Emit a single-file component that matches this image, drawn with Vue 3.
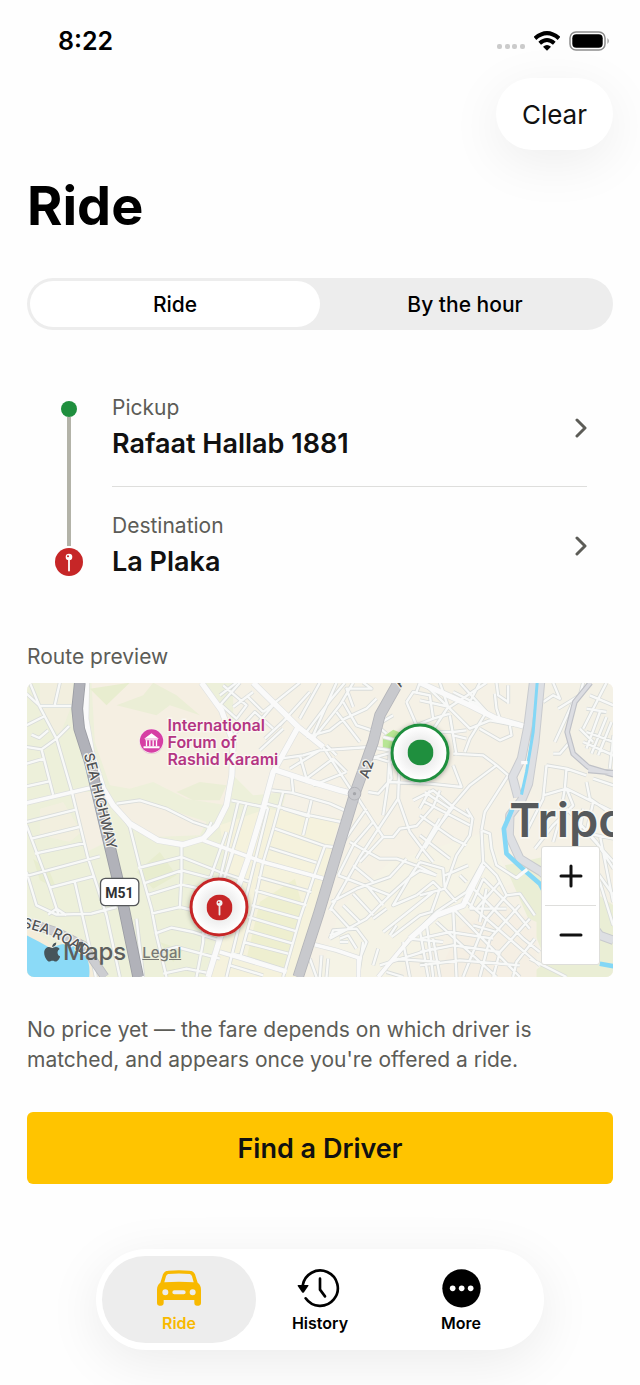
<script setup>
import { ref } from 'vue'

const modes = ['Ride', 'By the hour']
const activeMode = ref('Ride')
const activeTab = ref('Ride')

const tabs = [
  { name: 'Ride', icon: 'car' },
  { name: 'History', icon: 'clock' },
  { name: 'More', icon: 'more' }
]

const stops = ref([
  { label: 'Pickup', name: 'Rafaat Hallab 1881' },
  { label: 'Destination', name: 'La Plaka' }
])

const markers = [
  { kind: 'pickup', left: '67.1%', top: '23.8%' },
  { kind: 'dropoff', left: '32.8%', top: '76.2%' }
]

// map geometry, three units per pixel
const minorRoads = [
  // west of the sea highway
  'M30 22L60 95L110 190L155 345L205 550L260 720L300 905',
  'M20 55L60 92L155 92M120 22L105 88M20 150L75 122M35 178L58 188L85 165',
  'M20 215L65 222L110 190L148 152M65 222L100 358M20 265L72 250M20 333L88 318',
  'M20 440L168 403M35 490L178 455M45 535L195 503M20 602L240 543',
  'M20 450L90 637L115 715M20 590L50 690L110 718L215 715L290 695',
  'M90 637L225 602M165 620L215 840L228 905M85 718L110 700L140 720',
  // under the forum
  'M290 385L360 375L440 400L520 440L580 460M300 410L330 455L360 575L395 700L410 780L440 905',
  'M485 510L485 600L480 700M355 578L485 545L600 590L690 620M370 625L485 585L580 610',
  'M380 660L485 628L540 640M395 715L480 695L520 705M405 775L455 757L520 770L600 795',
  'M410 832L470 815L600 850M430 895L500 880L560 892M550 495L575 440M640 530L600 650',
  'M552 700L550 800L530 905M350 730L370 905',
  'M635 375L745 398M620 470L560 640M655 380L560 780',
  // grid east of the forum
  'M680 385L635 535L590 690M745 398L690 620L620 905M790 350L760 460L730 560L700 700L660 850',
  'M755 345L815 352L930 385L975 405M740 385L870 420L965 440M765 460L915 512L940 515M875 375L850 480M790 400L870 425',
  'M750 518L890 562M730 560L910 610M715 605L875 650M705 645L860 690M695 690L840 730M685 725L830 768',
  'M680 765L820 805M670 800L805 835M640 835L800 885M915 512L880 610L840 730L790 905M630 870L730 900',
  'M815 300L820 350M840 22L730 110M870 50L780 150M730 110L680 60M610 30L680 90L650 130L600 85',
  'M600 60L650 22M660 22L600 90M640 95L700 50M700 160L760 90M735 190L810 120M640 180L705 110L760 160',
  'M720 225L790 160M860 170L935 70L975 22M900 22L840 130M950 22L880 180M880 190L960 90L1000 22',
  'M970 80L1010 150L1070 170M950 110L1020 200M910 215L995 345M900 225L1050 215L1110 225L1200 235',
  'M860 185L930 165L975 130L1040 100L1070 70M1000 95L980 40L1055 40L1030 22M780 250L850 240L900 225',
  'M810 280L900 225M840 240L860 310M860 310L940 250M880 330L980 290M940 250L980 290M920 210L950 240',
  // centre, between A2 and the old town
  'M1015 370L1060 440L1090 485L1120 485L1140 460L1190 452L1240 395L1260 345M1040 400L970 500M1045 240L1110 260L1115 310L1075 355L1045 350',
  'M1050 250L1140 225M1090 185L1150 200M1120 120L1070 150L1100 175M1110 225L1105 320L1090 420M1140 230L1135 370L1170 470',
  'M1110 260L1200 270M1105 320L1230 325L1325 335L1300 270M1135 370L1020 545L930 705M1180 375L1240 345L1300 395L1350 425',
  'M990 500L1080 550L1130 550L1200 575L1250 600M1170 470L1215 530L1240 560M1060 440L1000 510L955 600M1090 485L1020 560',
  'M1200 560L1170 605L1110 660L1040 730L930 790M1160 550L1110 605L1010 640L935 680M955 600L1020 625L1110 660M1000 570L1060 620',
  'M1040 630L1090 690M1000 655L1060 720M970 690L1020 740M935 700L990 760L930 780M1250 600L1200 585L1170 605L1120 690L1190 660',
  'M1190 660L1240 620L1260 640L1235 710L1200 720L1115 785M1090 770L1240 650M1075 820L1060 870M1110 780L1130 750',
  'M930 790L940 765L1010 760L1040 800L1020 850M960 790L985 780L1010 820M985 800L960 800M870 850L890 905M905 840L900 905M925 850L920 905',
  'M1030 800L1015 900M1075 905L1200 760L1260 710M1080 870L1240 820M1120 850L1260 860M1150 800L1170 905M1200 765L1225 905M1170 790L1270 800',
  'M1100 890L1150 905M1060 730L1100 700',
  // north, around the pickup point
  'M1160 80L1190 150L1240 130L1230 60L1180 50L1160 80M1190 50L1200 22M1240 130L1290 115M1210 22L1290 100L1350 160L1410 135',
  'M1200 75L1290 95L1400 22M1260 22L1285 95L1235 170L1300 170L1340 165M1300 50L1380 90L1420 130M1380 22L1350 80L1430 130',
  'M1430 22L1435 60L1465 80M1465 30V85M1320 22L1400 110L1350 190L1335 230M1290 120L1300 180L1340 190M1440 130L1430 100L1425 55',
  'M1410 135L1490 150M1380 160L1440 195L1475 180L1470 150M1300 235L1390 240L1430 270L1465 300L1395 410L1385 465',
  'M1310 240L1300 180M1430 270L1350 330L1290 400L1215 520M1340 400L1358 430L1350 480L1310 540L1275 640L1200 660',
  'M1200 420L1300 490L1340 510M1215 380L1350 450M1200 480L1290 550M1230 345L1200 400M1290 400L1215 350M1260 430L1190 550M1300 395L1220 500',
  'M1275 600L1345 570M1200 560L1270 580L1275 640L1310 680M1385 465L1390 560L1340 650L1250 710L1200 760',
  'M1385 465L1410 475L1415 520L1430 570L1490 608L1520 580M1320 600L1340 620M1390 560L1430 600L1460 660L1500 655L1545 720',
  // south east blocks
  'M1300 700L1310 905M1330 670L1560 870M1360 640L1510 790L1560 830M1390 610L1480 700L1530 760M1250 740L1430 905M1300 700L1500 905',
  'M1460 660L1400 730L1330 905M1500 690L1410 790L1380 905M1530 730L1440 830L1420 905M1545 790L1490 860L1480 905M1390 610L1350 700',
  'M1200 790L1290 770L1420 790M1200 830L1300 810L1440 830M1200 870L1320 855L1500 870M1240 790L1260 905M1220 740L1240 905M1350 700L1460 700',
  'M1400 640L1380 740M1440 620L1370 700M1360 750L1430 770M1530 850L1640 905',
  // far east
  'M1570 80L1600 60L1620 70L1600 22M1615 100L1680 60L1690 22M1605 200L1660 80M1600 235H1620L1650 200M1580 270L1640 280L1700 300',
  'M1580 270L1570 370L1520 470M1640 280L1635 340L1620 430L1600 500M1570 360L1640 340L1780 410M1640 340L1660 390L1600 450L1545 520',
  'M1700 320L1710 370L1781 420M1720 310L1781 330M1690 400L1680 470L1781 490M1720 380L1700 470L1781 560M1640 400L1730 500L1781 580',
  'M1710 60L1781 90M1700 100L1760 110M1760 22L1720 100L1690 160M1680 160L1720 200M1740 110L1700 220M1760 125L1715 235M1775 140L1735 240M1700 170L1781 200M1690 200L1781 240M1770 280L1781 180',
  'M1740 480L1780 680M1740 620L1780 750M1710 560L1781 660'
].join('')

const mainRoads = [
  'M200 22L198 130L215 230L250 340L280 390L330 445L415 495L490 508L550 490L590 450L620 390L636 300L640 200L605 105L545 22',
  'M700 22L835 155L910 215M835 155L760 290L730 400L685 550L600 790L565 905',
  'M760 282L860 315L960 345L1000 355',
  'M1200 22L1350 90L1430 130L1510 152M1170 790L1250 720L1330 690L1390 570'
].join('')

const sideRoads = 'M20 383L210 338M550 495L730 560L920 612M600 830L800 890M885 808L950 825L1025 850M1016 850V905M1075 905L1170 790'

const eastRoads = [
  'M1541 22L1525 150L1505 250L1478 305L1494 365',
  'M1562 22L1545 200L1526 325L1505 375L1470 420L1468 480L1500 550L1565 590L1680 700L1740 780L1781 795'
].join('')
const railway = 'M1712 22L1665 80L1642 170L1660 235L1705 275L1781 298M1705 285L1781 292'
const seaHighway = 'M180 22L172 100L178 160L210 260L255 450L300 640L355 905'
const a2 = 'M1135 22L1080 120L1060 200L1030 285L1005 355L955 520L895 720L835 905'
</script>

<template>
  <div class="screen">
    <header class="status-bar">
      <span class="time">8:22</span>
      <div class="status-icons">
        <svg width="28" height="20" viewBox="0 0 28 20" fill="#cbcbcb">
          <rect x="0" y="13" width="5" height="5" rx="2" />
          <rect x="8" y="13" width="5" height="5" rx="2" />
          <rect x="15" y="13" width="5" height="5" rx="2" />
          <rect x="23" y="13" width="5" height="5" rx="2" />
        </svg>
        <svg width="26" height="20" viewBox="0 0 26 20" fill="none" stroke="#000" stroke-width="4">
          <path d="M1 7.4Q13-3 25 7.4" />
          <path d="M5.7 12.2Q13 5.8 20.3 12.2" />
          <path d="M9 15.8Q13 12 17 15.8L13 19.8Z" fill="#000" stroke="none" />
        </svg>
        <svg width="41" height="20" viewBox="0 0 41 20">
          <rect x="1" y="1" width="35" height="18" rx="6" fill="none" stroke="#8d8d8d" stroke-width="1.5" />
          <rect x="3.3" y="3.3" width="30.4" height="13.4" rx="4" />
          <path d="M38.5 7Q41 10 38.5 13Z" fill="#8d8d8d" />
        </svg>
      </div>
    </header>

    <div class="toolbar">
      <button type="button" class="clear-button">Clear</button>
    </div>

    <main class="content">
      <h1>Ride</h1>

      <div class="segmented">
        <button
            v-for="mode in modes"
            :key="mode"
            type="button"
            :class="{ active: activeMode === mode }"
            :aria-pressed="activeMode === mode"
            @click="activeMode = mode"
        >
          {{ mode }}
        </button>
      </div>

      <section class="trip">
        <div class="rail">
          <span class="rail-dot"></span>
          <span class="rail-line"></span>
          <svg class="rail-pin" viewBox="0 0 28 28">
            <circle cx="14" cy="14" r="14" fill="#c62627" />
            <path d="M14 12V22.5" stroke="#fff" stroke-width="1.8" stroke-linecap="round" />
            <circle cx="14" cy="9" r="3.3" fill="#fff" />
            <circle cx="13" cy="8.2" r="1" fill="#c62627" />
          </svg>
        </div>

        <div class="stops">
          <button v-for="stop in stops" :key="stop.label" type="button" class="stop">
            <span class="stop-text">
              <span class="stop-label">{{ stop.label }}</span>
              <span class="stop-name">{{ stop.name }}</span>
            </span>
            <svg class="chevron" viewBox="0 0 12 20">
              <path d="M2 2L10 10L2 18" />
            </svg>
          </button>
        </div>
      </section>

      <h2>Route preview</h2>

      <div class="map">
        <svg class="map-canvas" viewBox="20 23 1761 882" preserveAspectRatio="xMidYMid slice">
          <rect x="20" y="20" width="1761" height="890" fill="#f5f1e6" />
          <path d="M20 20H640L640 300L700 360L800 350L740 560L690 905H20Z" fill="#edf0da" />
          <path d="M215 22H540L630 110L640 300L620 390L500 370L400 320L330 340L270 330L225 200Z" fill="#f5efe2" />
          <path d="M290 385L370 375L560 440L540 480L400 485L320 440ZM150 350L215 350L260 500L200 530Z" fill="#f4efe3" />
          <path d="M60 400L130 380L185 470L150 500L60 480ZM60 22H160V80L120 180L60 120Z" fill="#f3efe0" opacity=".8" />
          <path d="M290 90L370 60L400 22L470 60L540 120L450 90L410 120ZM470 350L540 320L620 330L600 375L520 375Z" fill="#ebeed6" />
          <path d="M210 40L330 22L260 90ZM350 590L420 530L470 600L400 640ZM40 550L90 590L110 640L60 615ZM420 800L490 825L460 860Z" fill="#e8edcf" />
          <path d="M600 450L740 400L960 430L910 620L835 905H560L640 700Z" fill="#f5f2dd" />
          <path d="M720 680L825 610L850 700L800 880L680 850Z" fill="#eeefd0" />
          <path d="M1110 560L1400 470L1480 620L1350 700L1120 905H900L960 700Z" fill="#f5f3e6" />
          <path d="M1540 22H1781V540L1700 560L1600 400L1530 350Z" fill="#f4f1e6" />
          <path d="M1455 570L1570 545L1781 690V905H1520L1580 860L1530 740Z" fill="#eaeed5" />
          <path d="M1250 905L1320 760L1440 690L1550 740V905Z" fill="#f5efe4" />
          <path d="M1089 185L1120 163L1150 175L1160 222H1089Z" fill="#b8e694" />
          <path d="M20 760Q60 770 95 810Q180 790 240 905H20Z" fill="#f5edda" />

          <path :d="minorRoads" class="road minor-edge" />
          <path :d="sideRoads" class="road side-edge" />
          <path :d="mainRoads" class="road main-edge" />
          <path :d="minorRoads" class="road minor" />
          <path :d="sideRoads" class="road side" />
          <path :d="mainRoads" class="road main" />

          <path d="M20 780Q60 800 95 820Q130 795 170 815Q215 840 208 905H20Z" fill="#8bdaf7" />
          <path :d="railway" class="road" stroke="#bfc1c7" stroke-width="17" />
          <path :d="railway" class="road" stroke="#dcdde2" stroke-width="10" />
          <path :d="eastRoads" class="road" stroke="#c8cace" stroke-width="28" />
          <path :d="eastRoads" class="road" stroke="#dddfe3" stroke-width="22" />
          <path d="M1552 22L1540 170L1520 290L1505 358" class="road" stroke="#83d7f6" stroke-width="9" />
          <path d="M1478 400L1452 460L1460 535L1510 582L1560 625L1600 700M1740 865L1781 873" class="road" stroke="#83d7f6" stroke-width="14" />
          <path d="M1504 262H1523M1490 608L1522 582" stroke="#fafafa" stroke-width="10" />
          <path d="M20 740L110 770L190 810L255 905" class="road" stroke="#b9bbc0" stroke-width="28" />
          <path d="M20 740L110 770L190 810L255 905" class="road" stroke="#cccdd1" stroke-width="23" />
          <path :d="seaHighway" class="road" stroke="#9a9ca3" stroke-width="35" />
          <path :d="seaHighway" class="road" stroke="#b1b2b9" stroke-width="30" />
          <path :d="a2" class="road" stroke="#b3b4b9" stroke-width="34" />
          <path :d="a2" class="road" stroke="#c8c9cd" stroke-width="29" />
          <circle cx="1004" cy="355" r="19" fill="#c8c9cd" stroke="#b3b4b9" stroke-width="3" />
          <circle cx="1004" cy="355" r="5" fill="#a5a6ab" />

          <path id="sea-highway-line" d="M192 238Q232 390 276 580" fill="none" />
          <path id="sea-road-line" d="M6 756Q110 775 220 860" fill="none" />
          <text class="street"><textPath href="#sea-highway-line">SEA HIGHWAY</textPath></text>
          <text class="street"><textPath href="#sea-road-line">SEA ROAD</textPath></text>
          <text class="street" transform="translate(1045 312) rotate(-72)">A2</text>
          <text class="street" transform="translate(1143 38) rotate(-58)">A2</text>

          <rect x="242" y="609" width="115" height="82" rx="15" fill="#fff" stroke="#55575a" stroke-width="4" />
          <text class="shield" x="299" y="667">M51</text>

          <circle cx="395" cy="200" r="36" fill="#a33a7d" opacity=".25" />
          <circle cx="395" cy="197" r="37" fill="#f9edf5" />
          <circle cx="395" cy="197" r="35" fill="#d63fa4" />
          <path d="M373 190L395 174L417 190ZM371 213H419V219H371ZM376 192H414V195H376Z" fill="#fff" />
          <path d="M380 195V213M390 195V213M400 195V213M410 195V213" stroke="#fff" stroke-width="4" />
          <text class="poi" x="443" y="167">International</text>
          <text class="poi" x="443" y="218">Forum of</text>
          <text class="poi" x="443" y="269">Rashid Karami</text>

          <text class="city" x="1468" y="485">Tripoli</text>
        </svg>

        <div
            v-for="marker in markers"
            :key="marker.kind"
            class="marker"
            :class="marker.kind"
            :style="{ left: marker.left, top: marker.top }"
        >
          <svg viewBox="0 0 26 26">
            <circle cx="13" cy="13" r="13" fill="currentColor" />
            <g v-if="marker.kind === 'dropoff'">
              <path d="M13 10V20" stroke="#e9e9e9" stroke-width="1.8" stroke-linecap="round" />
              <circle cx="13" cy="8.5" r="3" fill="#f1f1f1" />
              <circle cx="12.2" cy="7.8" r="0.9" fill="#c62627" />
            </g>
          </svg>
        </div>

        <div class="attribution">
          <svg class="apple" viewBox="0 30 376 452">
            <path d="M318.7 268.7c-.2-36.7 16.4-64.4 50-84.8-18.8-26.9-47.2-41.7-84.7-44.6-35.5-2.8-74.3 20.7-88.5 20.7-15 0-49.4-19.7-76.4-19.7C63.3 141.2 4 184.8 4 273.5q0 39.3 14.4 81.2c12.8 36.7 59 126.7 107.2 125.2 25.2-.6 43-17.9 75.8-17.9 31.8 0 48.3 17.9 76.4 17.9 48.6-.7 90.4-82.5 102.6-119.3-65.2-30.7-61.7-90-61.7-91.9zm-56.6-164.2c27.3-32.4 24.8-61.9 24-72.5-24.1 1.4-52 16.4-67.9 34.9-17.5 19.8-27.8 44.3-25.6 71.9 26.1 2 49.9-11.4 69.5-34.3z" />
          </svg>
          <span class="maps">Maps</span>
          <a href="#">Legal</a>
        </div>

        <div class="zoom">
          <button type="button" aria-label="Zoom in">
            <svg viewBox="0 0 24 24"><path d="M2 12H22M12 2V22" /></svg>
          </button>
          <button type="button" aria-label="Zoom out">
            <svg viewBox="0 0 24 24"><path d="M2 12H22" /></svg>
          </button>
        </div>
      </div>

      <p class="note">
        No price yet — the fare depends on which driver is matched, and appears once you're offered a ride.
      </p>

      <button type="button" class="find-button">Find a Driver</button>
    </main>

    <nav class="tab-bar">
      <button
          v-for="tab in tabs"
          :key="tab.name"
          type="button"
          class="tab"
          :class="{ active: activeTab === tab.name }"
          @click="activeTab = tab.name"
      >
        <svg v-if="tab.icon === 'car'" width="46" height="39" viewBox="225 116 138 117">
          <path
              fill="currentColor"
              fill-rule="evenodd"
              d="M262 121Q294 118 326 121Q338 122 342 132L350 157Q360 164 360 178V219Q360 226 353 226H347Q340 226 340 219V209H248V219Q248 226 241 226H235Q228 226 228 219V178Q228 164 238 157L246 132Q250 122 262 121ZM262 131Q257 132 255 138L250 156Q294 152 338 156L333 138Q331 132 326 131Q294 128 262 131ZM253 177A9 9 0 1 0 253 195A9 9 0 1 0 253 177ZM335 177A9 9 0 1 0 335 195A9 9 0 1 0 335 177ZM280 180Q274 180 274 186Q274 192 280 192H308Q314 192 314 186Q314 180 308 180Z"
          />
        </svg>
        <svg v-else-if="tab.icon === 'clock'" width="48" height="39" viewBox="646 116 144 117">
          <g fill="none" stroke="currentColor" stroke-width="8" stroke-linecap="round" stroke-linejoin="round">
            <path d="M666 166A53 53 0 1 1 675 204" />
            <path d="M718 145V178L733 198" />
          </g>
          <path d="M653 164H682Q685 164 683 167L670 186Q667 189 664 186L651 167Q650 164 653 164Z" fill="currentColor" />
        </svg>
        <svg v-else width="39" height="39" viewBox="1082 116 117 117">
          <circle cx="1140.5" cy="174" r="57.5" fill="currentColor" />
          <g fill="#fff">
            <circle cx="1114" cy="174" r="8.5" />
            <circle cx="1141" cy="174" r="8.5" />
            <circle cx="1168" cy="174" r="8.5" />
          </g>
        </svg>
        <span>{{ tab.name }}</span>
      </button>
    </nav>
  </div>
</template>

<style>
body {
  margin: 0;
  background: #fefefe;
}
</style>

<style scoped>
.screen {
  font-family: Inter, "Liberation Sans", sans-serif;
  color: #111;
  overflow: hidden;
}

button {
  border: 0;
  margin: 0;
  padding: 0;
  background: none;
  font: inherit;
  color: inherit;
  cursor: pointer;
}

svg {
  display: block;
}

.status-bar {
  display: flex;
  justify-content: space-between;
  align-items: center;
  height: 78px;
  padding: 4px 30px 0 58px;
  box-sizing: border-box;
}

.time {
  font-size: 25px;
  font-weight: 600;
  color: #000;
}

.status-icons {
  display: flex;
  gap: 9px;
}

.toolbar {
  display: flex;
  justify-content: flex-end;
  padding: 0 27px;
}

.clear-button {
  height: 72px;
  padding: 0 26px;
  border-radius: 36px;
  background: #fff;
  font-size: 26px;
  box-shadow: 0 12px 54px rgba(0, 0, 0, 0.07);
}

.content {
  padding: 0 27px;
}

h1 {
  margin: 24px 0 40px;
  font-size: 54px;
  line-height: 64px;
  font-weight: 700;
  color: #000;
}

.segmented {
  display: flex;
  height: 52px;
  padding: 3px;
  box-sizing: border-box;
  border-radius: 26px;
  background: #ededed;
}

.segmented button {
  flex: 1;
  border-radius: 23px;
  font-size: 21px;
  font-weight: 500;
  color: #000;
}

.segmented .active {
  background: #fff;
}

/* TRIP */

.trip {
  display: flex;
  gap: 29px;
  margin-top: 64px;
  padding: 0 26px 0 28px;
}

.rail {
  display: flex;
  flex-direction: column;
  align-items: center;
  width: 28px;
  padding: 7px 0 4px;
}

.rail-dot {
  width: 16px;
  height: 16px;
  border-radius: 50%;
  background: #1f8f3e;
}

.rail-line {
  flex: 1;
  width: 4px;
  margin-bottom: 2px;
  background: #b3b3a8;
}

.rail-pin {
  width: 28px;
  height: 28px;
}

.stops {
  flex: 1;
}

.stop {
  display: flex;
  justify-content: space-between;
  align-items: center;
  width: 100%;
  text-align: left;
}

.stop + .stop {
  margin-top: 24px;
  padding-top: 25px;
  border-top: 1px solid #dededc;
}

.stop-text {
  display: flex;
  flex-direction: column;
  gap: 4px;
}

.stop-label {
  font-size: 21px;
  line-height: 28px;
  color: #5c5c57;
}

.stop-name {
  font-size: 27px;
  line-height: 36px;
  font-weight: 600;
}

.chevron {
  width: 12px;
  height: 20px;
  fill: none;
  stroke: #5c5c57;
  stroke-width: 3;
  stroke-linecap: round;
  stroke-linejoin: round;
}

/* MAP */

h2 {
  margin: 63px 0 12px;
  font-size: 21px;
  line-height: 28px;
  font-weight: 400;
  color: #5c5c57;
}

.map {
  position: relative;
  aspect-ratio: 586 / 294;
  border-radius: 7px;
  overflow: hidden;
}

.map-canvas {
  width: 100%;
  height: 100%;
}

.road {
  fill: none;
  stroke-linejoin: round;
}

.minor-edge {
  stroke: #d9dcda;
  stroke-width: 12;
}

.minor {
  stroke: #f8f9f8;
  stroke-width: 7;
}

.side-edge {
  stroke: #dddfde;
  stroke-width: 15;
}

.side {
  stroke: #fafafa;
  stroke-width: 11;
}

.main-edge {
  stroke: #dfe1e0;
  stroke-width: 20;
}

.main {
  stroke: #fafafa;
  stroke-width: 16;
}

.street {
  font-size: 42px;
  font-weight: 500;
  fill: #515356;
  stroke: #f5f5f0;
  stroke-width: 7;
  paint-order: stroke;
}

.poi {
  font-size: 48px;
  font-weight: 600;
  fill: #b43683;
  stroke: #fbf7f2;
  stroke-width: 8;
  paint-order: stroke;
}

.shield {
  font-family: "Liberation Sans Narrow", Roboto, sans-serif;
  font-size: 42px;
  font-weight: 700;
  text-anchor: middle;
  fill: #303234;
}

.city {
  font-size: 141px;
  font-weight: 600;
  fill: #56595b;
  stroke: #f8f7f1;
  stroke-width: 10;
  paint-order: stroke;
}

.marker {
  position: absolute;
  display: flex;
  align-items: center;
  justify-content: center;
  width: 59px;
  height: 59px;
  box-sizing: border-box;
  border: 3px solid currentColor;
  border-radius: 50%;
  background: radial-gradient(#f0f0f0 40%, #fdfdfd 66%);
  box-shadow: 0 1px 5px rgba(0, 0, 0, 0.35);
  transform: translate(-50%, -50%);
}

.marker svg {
  width: 26px;
  height: 26px;
}

.pickup {
  color: #1f8f3e;
}

.dropoff {
  color: #c62627;
}

.attribution {
  position: absolute;
  left: 17px;
  bottom: 9px;
  display: flex;
  align-items: center;
  color: #5d5f5e;
}

.apple {
  width: 16px;
  height: 20px;
  margin-right: 3px;
  fill: #46555b;
}

.maps {
  margin-right: 16px;
  font-size: 24px;
  line-height: 32px;
  font-weight: 500;
}

.attribution a {
  font-size: 15px;
  font-weight: 500;
  color: #777974;
}

.zoom {
  position: absolute;
  right: 13px;
  bottom: 12px;
  display: flex;
  flex-direction: column;
  width: 59px;
  height: 119px;
  box-sizing: border-box;
  padding: 0 3px;
  border: 1px solid #dededa;
  border-radius: 3px;
  background: #fff;
}

.zoom button {
  display: flex;
  flex: 1;
  align-items: center;
  justify-content: center;
}

.zoom button + button {
  border-top: 1px solid #dededc;
}

.zoom svg {
  width: 24px;
  height: 24px;
  fill: none;
  stroke: #111;
  stroke-width: 3;
  stroke-linecap: round;
}

/* FOOTER */

.note {
  margin: 38px 0 37px;
  font-size: 21px;
  line-height: 30px;
  color: #5c5c57;
}

.find-button {
  width: 100%;
  height: 72px;
  border-radius: 6px;
  background: #ffc400;
  font-size: 27px;
  font-weight: 600;
}

.tab-bar {
  display: flex;
  width: fit-content;
  margin: 65px auto 35px;
  padding: 7px 6px;
  border-radius: 51px;
  background: #fff;
  box-shadow: 0 12px 54px rgba(0, 0, 0, 0.08);
}

.tab {
  display: flex;
  flex-direction: column;
  align-items: center;
  gap: 5px;
  width: 154px;
  padding: 13px 0 10px;
  border-radius: 44px;
  color: #000;
}

.tab + .tab {
  margin-left: -13px;
}

.tab span {
  font-size: 16px;
  line-height: 20px;
  font-weight: 600;
}

.tab.active {
  background: #ededed;
  color: #f8b900;
}
</style>
